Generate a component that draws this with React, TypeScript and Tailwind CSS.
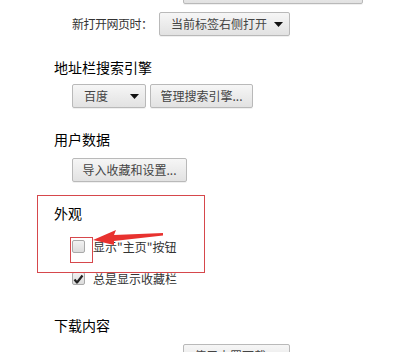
import React from 'react';

const font = { fontFamily: '"Microsoft YaHei", "Noto Sans CJK SC", sans-serif' };

function Btn({ className, children }: { className: string; children?: React.ReactNode }) {
    return (
        <div className={`flex shrink-0 items-center whitespace-nowrap rounded-[2px] border border-[#b9b9b9] bg-gradient-to-b from-[#f6f6f6] to-[#e2e2e2] text-[12px] text-[#444] shadow-[0_1px_0_rgba(0,0,0,0.06)] ${className}`}>
            {children}
        </div>
    );
}

function Caret() {
    return (
        <svg width="9" height="5" viewBox="0 0 9 5" className="ml-auto shrink-0">
            <path d="M0 0 L9 0 L4.5 5 Z" fill="#111" />
        </svg>
    );
}

function Checkbox({ checked }: { checked?: boolean }) {
    return (
        <div className="flex h-[13px] w-[13px] shrink-0 items-center justify-center rounded-[2px] border border-[#a9a9a9] bg-gradient-to-b from-[#f2f2f2] to-[#dcdcdc]">
            {checked && (
                <svg width="11" height="10" viewBox="0 0 11 10">
                    <path d="M1.5 5.5 L4 8.5 L9.5 1.5" fill="none" stroke="#222" strokeWidth="2.2" strokeLinejoin="round" />
                </svg>
            )}
        </div>
    );
}

export default function App() {
    return (
        <div className="relative h-[352px] w-[394px] overflow-hidden bg-white" style={font}>
            <div className="flex flex-col">
                <Btn className="ml-[183px] mt-[-21px] h-[25px] w-[180px]" />

                <div className="ml-[72px] mt-[8px] flex items-center whitespace-nowrap">
                    <span className="w-[83px] shrink-0 text-[12px] tracking-[-0.5px] text-[#333]">新打开网页时：</span>
                    <Btn className="ml-[4px] h-[24px] w-[131px] pl-[11px] pr-[6px]">
                        当前标签右侧打开
                        <Caret />
                    </Btn>
                </div>

                <div className="ml-[54px] mt-[21px] h-[20px] text-[14px] leading-[20px] text-black">地址栏搜索引擎</div>

                <div className="ml-[72px] mt-[7px] flex gap-[4px]">
                    <Btn className="h-[24px] w-[74px] pl-[11px] pr-[6px]">
                        百度
                        <Caret />
                    </Btn>
                    <Btn className="h-[24px] w-[103px] justify-center">管理搜索引擎...</Btn>
                </div>

                <div className="ml-[54px] mt-[21px] h-[20px] text-[14px] leading-[20px] text-black">用户数据</div>

                <Btn className="ml-[72px] mt-[9px] h-[24px] w-[115px] justify-center">导入收藏和设置...</Btn>

                <div className="ml-[54px] mt-[21px] h-[20px] text-[14px] leading-[20px] text-black">外观</div>

                <div className="ml-[72px] mt-[17px] flex h-[13px] items-center gap-[8px]">
                    <Checkbox />
                    <span className="text-[12px] text-[#333]">显示"主页"按钮</span>
                </div>

                <div className="ml-[72px] mt-[19px] flex h-[13px] items-center gap-[8px]">
                    <Checkbox checked />
                    <span className="text-[12px] text-[#333]">总是显示收藏栏</span>
                </div>

                <div className="ml-[54px] mt-[30px] h-[20px] text-[14px] leading-[20px] text-black">下载内容</div>

                <div className="ml-[72px] mt-[9px] flex items-start whitespace-nowrap">
                    <span className="mt-[5px] w-[108px] shrink-0 text-[12px] text-[#333]">选择默认下载目录：</span>
                    <Btn className="ml-[3px] h-[24px] w-[107px] px-[10px]">使用内置下载</Btn>
                </div>
            </div>

            <div className="absolute left-[37px] top-[195px] h-[78px] w-[168px] border border-[#d6484c]" />
            <div className="absolute left-[70px] top-[237px] h-[26px] w-[23px] border border-[#d6484c]" />
            <svg className="absolute left-0 top-0" width="394" height="352">
                <path d="M93 240 L116 230 L114 235 L163 233 L163 235.5 L114 241 L114 245 Z" fill="#e8322f" />
            </svg>
        </div>
    );
}
